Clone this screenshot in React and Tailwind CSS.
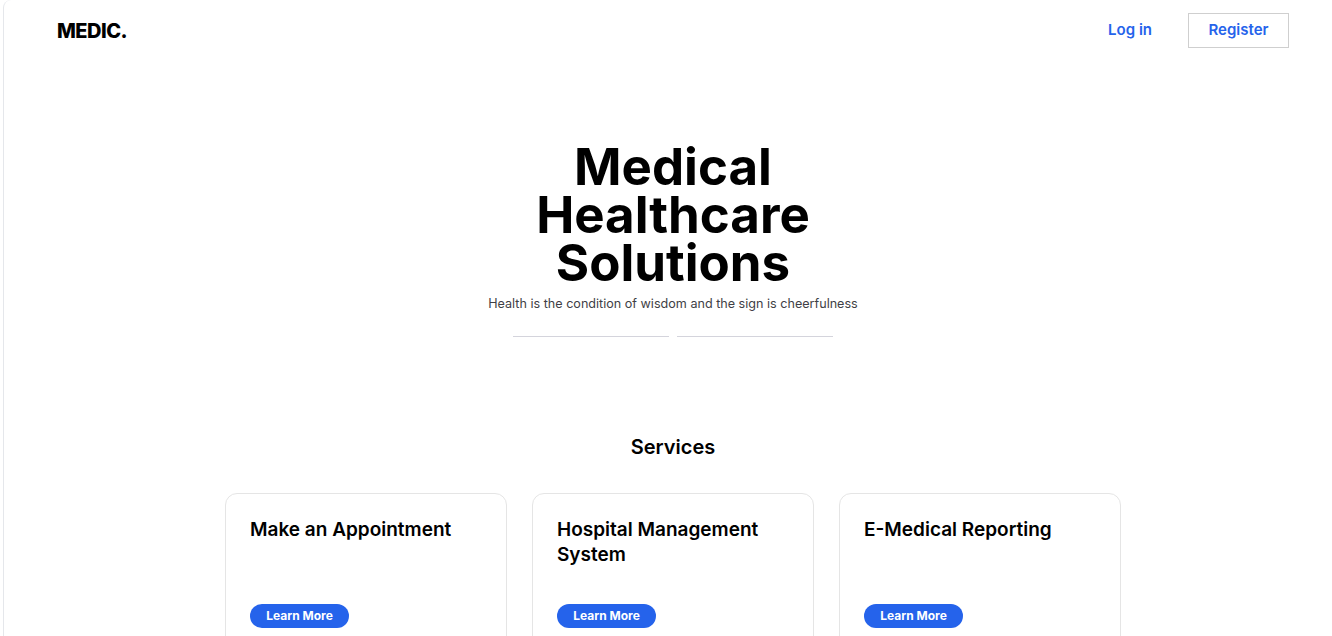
const services = [
  { title: "Make an Appointment" },
  { title: "Hospital Management System" },
  { title: "E-Medical Reporting" },
];

export default function App() {
  return (
    <div className="h-[636px] overflow-hidden bg-white font-['Inter',sans-serif] text-black">
      <div className="ml-[3px] w-[1339px] min-h-[700px] border-l border-gray-200 rounded-tl-lg">
        {/* Navbar */}
        <header className="flex items-center justify-between px-[53px] pt-[13px]">
          <span className="text-[20px] font-extrabold tracking-tight">MEDIC.</span>
          <nav className="flex items-center gap-9">
            <button className="text-[15px] font-semibold text-[#2563eb]">Log in</button>
            <button className="h-[35px] w-[101px] border border-[#cfcfcf] text-[15px] font-semibold text-[#2563eb]">
              Register
            </button>
          </nav>
        </header>

        {/* Hero */}
        <section className="mt-[95px] flex flex-col items-center text-center">
          <h1 className="text-[51px] font-bold leading-[48px]">
            Medical
            <br />
            Healthcare
            <br />
            Solutions
          </h1>
          <p className="mt-[8px] text-[12.6px] text-[#3f3f46]">
            Health is the condition of wisdom and the sign is cheerfulness
          </p>
          <div className="mt-[22px] flex gap-2">
            <div className="h-px w-[156px] bg-[#d4d4dc]" />
            <div className="h-px w-[156px] bg-[#d4d4dc]" />
          </div>
        </section>

        {/* Services */}
        <section className="mt-[95px] flex flex-col items-center">
          <h2 className="text-[20px] font-semibold">Services</h2>
          <div className="mt-[31px] grid grid-cols-3 gap-[25px]">
            {services.map((s) => (
              <div
                key={s.title}
                className="flex h-[170px] w-[282px] flex-col justify-between rounded-xl border border-[#e5e5e5] px-[24px] pb-[34px] pt-[23px]"
              >
                <h3 className="pr-4 text-[19px] font-semibold leading-[25px]">{s.title}</h3>
                <button className="h-[24px] w-[99px] rounded-full bg-[#2563eb] text-[12px] font-bold text-white">
                  Learn More
                </button>
              </div>
            ))}
          </div>
        </section>
      </div>
    </div>
  );
}
